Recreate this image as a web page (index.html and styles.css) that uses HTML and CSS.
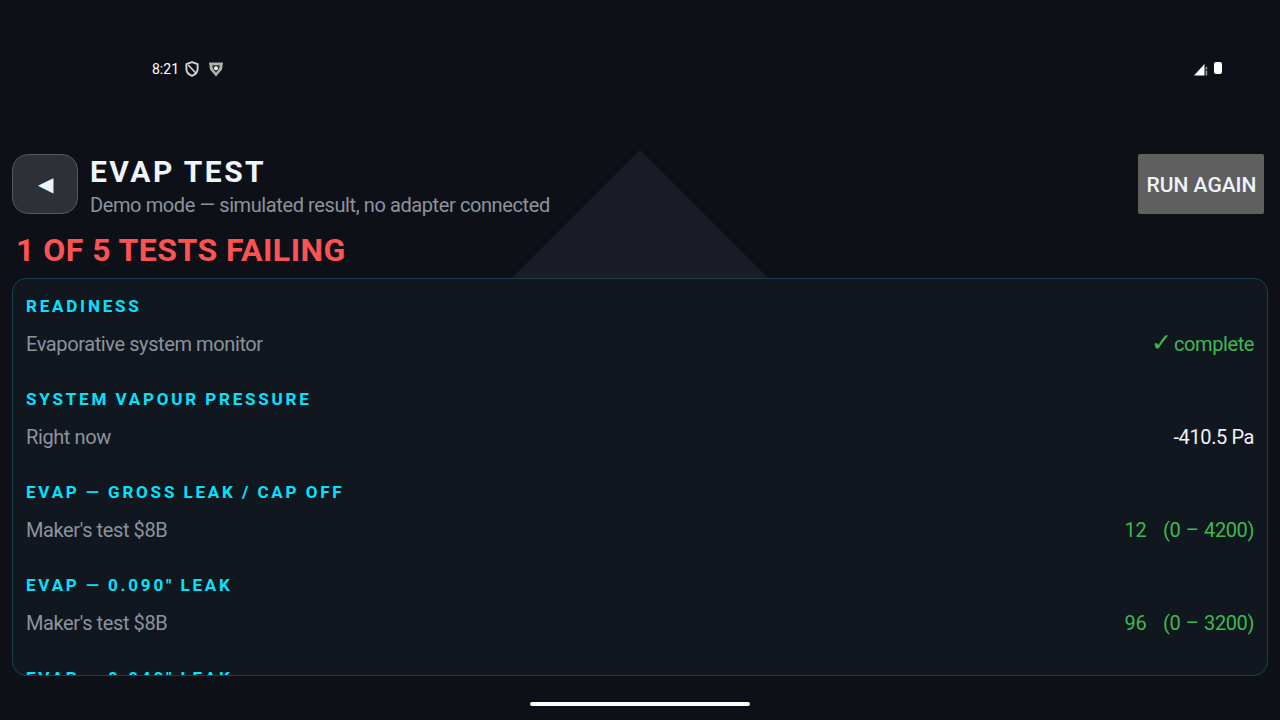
FILE: index.html
```html
<!DOCTYPE html>
<html>
  <head>
    <meta name="viewport" content="width=device-width, initial-scale=1" />
    <link rel="stylesheet" href="styles.css">
  </head>
  <body>
    <div class="screen">
      <div class="backdrop"></div>

      <div class="statusbar">
        <div class="status-left">
          <span class="clock">8:21</span>
          <svg class="status-icon" viewBox="0 0 14 16" width="14" height="16">
            <path d="M7 1.2 L12.6 3.2 V8 C12.6 11.2 10.2 13.6 7 14.8 C3.8 13.6 1.4 11.2 1.4 8 V3.2 Z" fill="none" stroke="#d4d4d4" stroke-width="1.9" stroke-linejoin="round" />
            <path d="M3.2 4 L10.8 12" stroke="#d4d4d4" stroke-width="1.7" />
          </svg>
          <svg class="status-icon gap" viewBox="0 0 16 16" width="16" height="16">
            <path d="M1 1.5 H15 L14 8.5 L8 15.5 L2 8.5 Z" fill="#b0b0b0" />
            <path d="M4.2 4.2 H11.8 L11 8 L8 11.8 L5 8 Z" fill="#2a2d32" />
            <circle cx="8" cy="7.2" r="2" fill="#ececec" />
          </svg>
        </div>
        <div class="status-right">
          <svg viewBox="0 0 14 14" width="14" height="14">
            <path d="M0 13.5 L10.5 2 V13.5 Z" fill="#ffffff" />
            <rect x="11.6" y="5" width="1.6" height="2.5" fill="#9a9a9a" />
            <rect x="11.6" y="8.5" width="1.6" height="5" fill="#9a9a9a" />
          </svg>
          <span class="battery"></span>
        </div>
      </div>

      <div class="header">
        <button class="back-btn">◀</button>
        <div class="header-text">
          <div class="title">EVAP TEST</div>
          <div class="subtitle">Demo mode — simulated result, no adapter connected</div>
        </div>
        <button class="run-btn">RUN AGAIN</button>
      </div>

      <div class="verdict">1 OF 5 TESTS FAILING</div>

      <div class="card">
        <div class="section">READINESS</div>
        <div class="row">
          <span class="label">Evaporative system monitor</span>
          <span class="value good"><span class="tick">✓</span> complete</span>
        </div>

        <div class="section">SYSTEM VAPOUR PRESSURE</div>
        <div class="row">
          <span class="label">Right now</span>
          <span class="value">-410.5 Pa</span>
        </div>

        <div class="section">EVAP — GROSS LEAK / CAP OFF</div>
        <div class="row">
          <span class="label">Maker's test $8B</span>
          <span class="value good range">12 &nbsp; (0 – 4200)</span>
        </div>

        <div class="section">EVAP — 0.090" LEAK</div>
        <div class="row">
          <span class="label">Maker's test $8B</span>
          <span class="value good range">96 &nbsp; (0 – 3200)</span>
        </div>

        <div class="section">EVAP — 0.040" LEAK</div>
      </div>

      <div class="home-bar"></div>
    </div>
  </body>
</html>
```

FILE: styles.css
```css
* {
  box-sizing: border-box;
}
body {
  margin: 0;
  background: #0d1117;
  font-family: Roboto, sans-serif;
  color: #f0f4fa;
}

.screen {
  position: relative;
  width: 1280px;
  height: 720px;
  overflow: hidden;
  display: flex;
  flex-direction: column;
  padding: 0 12px;
}

/* Faint triangle behind the card */
.backdrop {
  position: absolute;
  left: 512px;
  top: 150px;
  width: 256px;
  height: 128px;
  background: #1a1d25;
  clip-path: polygon(50% 0, 100% 100%, 0 100%);
}

/* Status bar */
.statusbar {
  height: 154px;
  padding: 60px 46px 0 140px;
  display: flex;
  justify-content: space-between;
  align-items: flex-start;
}
.status-left {
  display: flex;
  align-items: center;
  height: 18px;
}
.clock {
  font-size: 14px;
  color: #ffffff;
  margin-right: 6px;
}
.status-icon.gap {
  margin-left: 9px;
}
.status-right {
  display: flex;
  align-items: flex-start;
  gap: 6px;
  height: 18px;
  padding-top: 2px;
}
.battery {
  width: 8px;
  height: 12px;
  background: #ffffff;
  border-radius: 2px;
}

/* Header */
.header {
  position: relative;
  display: flex;
  align-items: center;
  height: 60px;
  margin-right: 4px;
}
.back-btn {
  width: 66px;
  height: 60px;
  border: 1px solid #55595f;
  border-radius: 16px;
  background: #2d3035;
  color: #f0f4fa;
  font-family: Roboto, sans-serif;
  font-size: 20px;
  padding: 0;
}
.header-text {
  flex: 1;
  align-self: flex-start;
  margin-left: 12px;
}
.title {
  font-size: 30px;
  line-height: 36px;
  font-weight: 700;
  letter-spacing: 2.45px;
}
.subtitle {
  font-size: 20px;
  line-height: 30px;
  letter-spacing: -0.4px;
  color: #8d939c;
}
.run-btn {
  width: 126px;
  height: 60px;
  border: 0;
  border-radius: 2px;
  background: #5f5f5f;
  color: #f0f4fa;
  font-family: Roboto, sans-serif;
  font-size: 21px;
  font-weight: 500;
  padding: 2px 0 0 1px;
}

.verdict {
  position: relative;
  height: 64px;
  padding: 16px 0 0 4px;
  font-size: 32px;
  line-height: 40px;
  font-weight: 700;
  letter-spacing: 0.45px;
  color: #ff5252;
}

/* Results card, cut off at the bottom */
.card {
  position: relative;
  height: 398px;
  padding: 14px 13px 0;
  overflow: hidden;
  background: #10171f;
  border: 1px solid #17404b;
  border-radius: 14px;
}
.section {
  height: 26px;
  line-height: 26px;
  font-size: 17px;
  font-weight: 700;
  letter-spacing: 2.8px;
  word-spacing: -0.7px;
  color: #00e5ff;
}
.row {
  display: flex;
  justify-content: space-between;
  align-items: center;
  height: 67px;
  padding-bottom: 17px;
  font-size: 20px;
  letter-spacing: -0.4px;
}
.label {
  color: #8d939c;
}
.value {
  color: #f0f4fa;
}
.good {
  color: #3fb950;
}
.range {
  word-spacing: 1px;
}
.tick {
  font-size: 25px;
  line-height: 20px;
  margin-right: -2px;
}

.home-bar {
  position: absolute;
  left: 530px;
  top: 702px;
  width: 220px;
  height: 4px;
  border-radius: 2px;
  background: #ffffff;
}
```
